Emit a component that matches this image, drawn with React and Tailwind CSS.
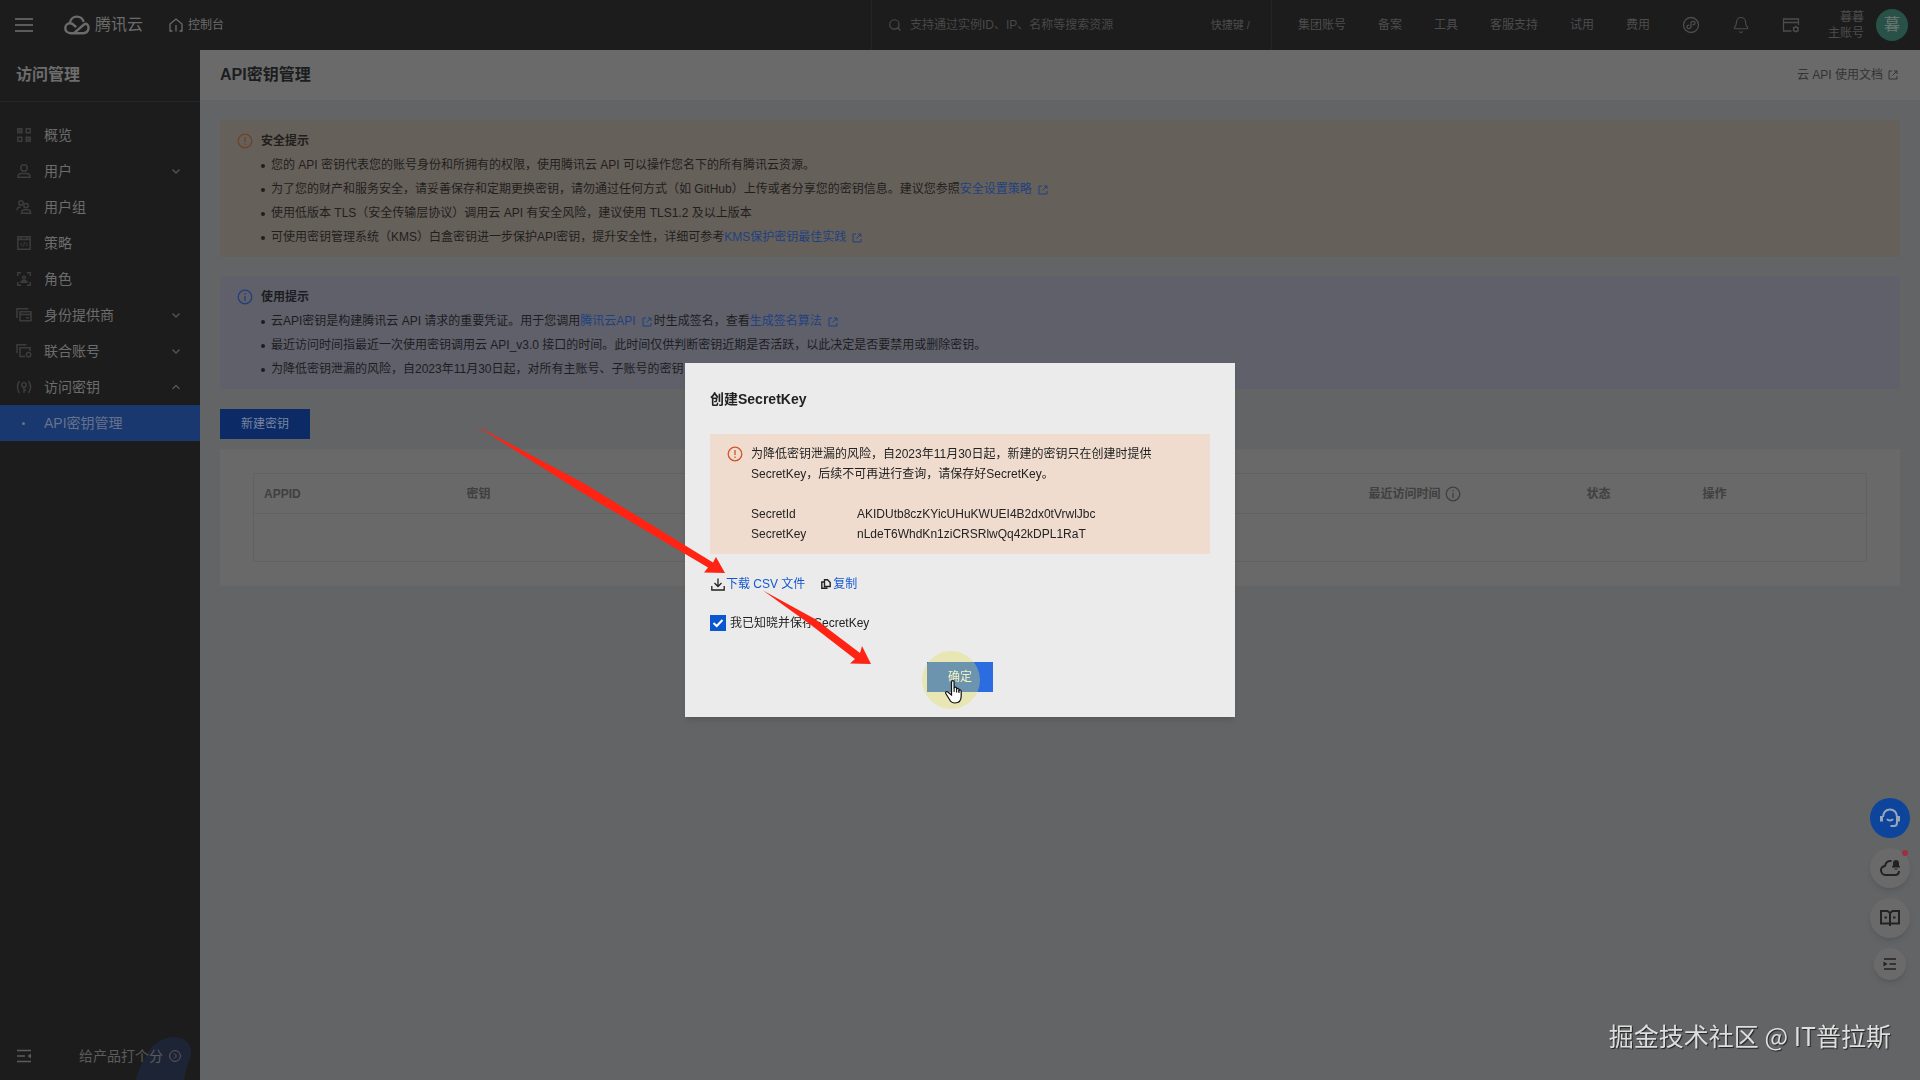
import { Bell, Search } from "lucide-react"

const navItems = [
  { label: "概览", icon: "grid" },
  { label: "用户", icon: "user", chevron: "down" },
  { label: "用户组", icon: "users" },
  { label: "策略", icon: "policy" },
  { label: "角色", icon: "role" },
  { label: "身份提供商", icon: "provider", chevron: "down" },
  { label: "联合账号", icon: "union", chevron: "down" },
  { label: "访问密钥", icon: "key", chevron: "up" },
]

const topLinks = ["集团账号", "备案", "工具", "客服支持", "试用", "费用"]

function NavIcon({ name }) {
  return (
    <svg className="w-4 h-4 shrink-0" viewBox="0 0 16 16" fill="none" stroke="currentColor" strokeWidth="1.5">
      {name === "grid" && (
        <>
          <path d="M1.8 1.8h4v4h-4zM10.2 1.8h4v4h-4zM1.8 10.2h4v4h-4zM10.2 10.2h4v4h-4z" />
          <path d="M3.8 2v4M2 3.8h4M12.2 10v4M10 12.2h4" strokeWidth="1" />
        </>
      )}
      {name === "user" && (
        <>
          <circle cx="8" cy="5" r="3.2" />
          <path d="M1.8 14.2c0-2.4 1.6-3.7 4-3.7h4.4c2.4 0 4 1.3 4 3.7z" />
        </>
      )}
      {name === "users" && (
        <>
          <circle cx="5" cy="4" r="2.2" />
          <path d="M1 11.5C1 9 2.6 8 4.5 8" />
          <circle cx="10" cy="6.6" r="2.2" />
          <path d="M5.5 14.2c0-2.2 1.3-3.4 3.2-3.4h2.6c1.9 0 3.4 1.2 3.4 3.4z" />
        </>
      )}
      {name === "policy" && (
        <>
          <path d="M1.8 1.8h12.4v12.4H1.8zM1.8 4.6h12.4M5 2v2.600M11 2v2.600" />
          <path d="M6 7.500L4.500 9.300 6 11.100M10 7.500l1.500 1.800L10 11.100M8.500 7l-1 4.500" strokeWidth="1" />
        </>
      )}
      {name === "role" && (
        <>
          <path d="M1.8 5V1.8H5M11 1.8h3.2V5M14.2 11v3.2H11M5 14.2H1.8V11" />
          <circle cx="8" cy="6.6" r="1.4" />
          <path d="M5 11.2c.5-1.4 1.5-1.8 3-1.8s2.5.4 3 1.8z" />
        </>
      )}
      {name === "provider" && (
        <>
          <path d="M1 11V1.8h11.5" />
          <path d="M4 4.8h11v9H4zM4 7.5h11" />
          <path d="M10 10.8h3" />
        </>
      )}
      {name === "union" && (
        <>
          <path d="M1 10V1.8h9.5" />
          <path d="M9 13.5H4V4.8h10V8" />
          <circle cx="12.6" cy="11.8" r="2.2" />
        </>
      )}
      {name === "key" && (
        <>
          <path d="M3.5 2C.8 5.5.8 10.5 3.5 14M12.5 2c2.7 3.5 2.7 8.5 0 12" />
          <circle cx="8" cy="6" r="2.2" />
          <path d="M8 8.2V14M8 11.2h2.2" />
        </>
      )}
    </svg>
  )
}

function Chevron({ direction }) {
  return (
    <svg className="w-2 h-2 text-[#555]" viewBox="0 0 8 8" fill="none" stroke="currentColor" strokeWidth="1.3">
      <path d={direction === "down" ? "M.5 2.5L4 6l3.5-3.5" : "M.5 6L4 2.5 7.5 6"} />
    </svg>
  )
}

function ExternalIcon() {
  return (
    <svg className="w-2.5 h-2.5 inline-block" viewBox="0 0 10 10" fill="none" stroke="currentColor">
      <path d="M4 1H1v8h8V6M6 1h3v3M9 1L4.5 5.5" />
    </svg>
  )
}

function AlertIcon({ type = "warning" }) {
  return (
    <svg className="w-4 h-4 shrink-0" viewBox="0 0 16 16" fill="none" stroke="currentColor" strokeWidth="1.3">
      <circle cx="8" cy="8" r="6.8" />
      <path d={type === "warning" ? "M8 4v5M8 10.5V12" : "M8 4v1.5M8 7v5"} />
    </svg>
  )
}

function DocLink({ children }) {
  return (
    <a href="#" className="text-[#1f4180]">
      {children}
      <span className="ml-1.5 mr-0.5">
        <ExternalIcon />
      </span>
    </a>
  )
}

function TipItem({ children }) {
  return (
    <li className="before:inline-block before:w-1 before:h-1 before:mr-1.5 before:rounded-full before:bg-current before:align-middle">
      {children}
    </li>
  )
}

function TopBar() {
  return (
    <header className="h-[50px] shrink-0 flex items-center bg-[#1c1c1c] text-[#4c4c4c] text-xs">
      <button aria-label="菜单" className="ml-[15px] w-[18px] flex flex-col gap-1">
        <span className="h-0.5 bg-[#5c5c5c]" />
        <span className="h-0.5 bg-[#5c5c5c]" />
        <span className="h-0.5 bg-[#5c5c5c]" />
      </button>
      <a href="#" className="ml-[31px] flex items-center gap-[5px] text-base text-[#6b6b6b]">
        <svg className="w-[26px] h-5" viewBox="0 0 26 20" fill="none" stroke="currentColor" strokeWidth="2.4">
          <path d="M10 18.2L20 9.500c1.200-.9 2.200-1 3-.3 2.800 2.600 1.600 9-3.500 9H6.500C3.500 18.200 1.300 16 1.300 13.200c0-2.700 2-4.900 4.700-4.900 1.800 0 3 .8 4.200 2l2 1.900" />
          <path d="M5.800 8.300C6.200 4.500 9 1.600 12.800 1.600c3.500 0 6 2.200 6.900 5.300" />
        </svg>
        腾讯云
      </a>
      <a href="#" className="ml-[26px] flex items-center gap-[5px] text-[#6b6b6b]">
        <svg className="w-3.5 h-3.5" viewBox="0 0 14 14" fill="none" stroke="currentColor" strokeWidth="1.3">
          <path d="M3.500 13H1V6l6-5 6 5v7h-2.500M7 7v6.500" />
        </svg>
        控制台
      </a>

      <div className="ml-auto w-[401px] h-full flex items-center border-x border-[#242424] pl-4">
        <Search className="w-3.5 h-3.5" strokeWidth={2} />
        <input
          aria-label="搜索"
          placeholder="支持通过实例ID、IP、名称等搜索资源"
          className="ml-2 flex-1 min-w-0 bg-transparent outline-none placeholder:text-[#484848]"
        />
        <span className="mr-[21px] text-[11px]">快捷键 /</span>
      </div>

      <nav className="ml-[26px] flex items-center gap-8">
        {topLinks.map((label) => (
          <a key={label} href="#">
            {label}
          </a>
        ))}
        <button aria-label="小程序" className="w-[18px]">
          <svg className="w-[18px] h-[18px]" viewBox="0 0 18 18" fill="none" stroke="currentColor" strokeWidth="1.3">
            <circle cx="9" cy="9" r="7.5" />
            <path d="M7.500 9.200c-1.500 0-2.500.6-2.500 1.700s.9 1.700 1.900 1.700S9 11.800 9 10.800V7.200c0-1 .9-1.800 2-1.800s2 .7 2 1.700-1 1.700-2.500 1.700" />
          </svg>
        </button>
        <button aria-label="消息">
          <Bell className="w-[18px] h-[18px]" strokeWidth={1.5} />
        </button>
        <button aria-label="控制面板">
          <svg className="w-[18px] h-[18px]" viewBox="0 0 18 18" fill="none" stroke="currentColor" strokeWidth="1.3">
            <path d="M9.500 15H1.500V3h15v6M1.500 6.500h15" />
            <circle cx="13.8" cy="13.2" r="2.2" />
            <path d="M13.800 9.800v1.200M13.800 15.400v1.200M10.800 11.500l1 .6M15.800 14.300l1 .6M16.800 11.500l-1 .6M11.800 14.300l-1 .6" />
          </svg>
        </button>
      </nav>
      <div className="ml-7 text-right leading-4">
        <div>暮暮</div>
        <div>主账号</div>
      </div>
      <div className="mx-3 w-8 h-8 rounded-full bg-[#285248] text-[#6c7672] text-base flex items-center justify-center">暮</div>
    </header>
  )
}

function Sidebar() {
  return (
    <aside className="w-[200px] shrink-0 flex flex-col bg-[#1c1c1c] text-[#6c6c6c] text-sm">
      <h2 className="h-[52px] shrink-0 flex items-center px-4 pb-0.5 text-base font-bold border-b border-[#262626]">访问管理</h2>
      <nav className="mt-[15px] flex flex-col">
        {navItems.map((item) => (
          <a key={item.label} href="#" className="h-9 flex items-center pl-4 pr-5">
            <span className="text-[#3c3c3c]">
              <NavIcon name={item.icon} />
            </span>
            <span className="ml-3 flex-1">{item.label}</span>
            {item.chevron && <Chevron direction={item.chevron} />}
          </a>
        ))}
        <a href="#" className="h-9 flex items-center bg-[#1a3870] text-[#66728a]">
          <span className="ml-[22px] mr-[19px] w-[3px] h-[3px] rounded-full bg-current" />
          API密钥管理
        </a>
      </nav>
      <div className="mt-auto h-12 relative overflow-hidden flex items-center pl-4 pr-[19px] text-[#5c5c5c]">
        <svg className="absolute right-0 bottom-0 w-16 h-11" viewBox="0 0 64 44">
          <path d="M0 44C6 26 12 4 36 1c16-1 22 12 18 22-4 8-4 14-6 21z" fill="#1d2436" />
        </svg>
        <button aria-label="收起" className="relative">
          <svg className="w-4 h-4" viewBox="0 0 16 16" fill="none" stroke="currentColor" strokeWidth="1.5">
            <path d="M1 2.500h14M1 8h8M1 13.500h14" />
            <path d="M15 5.500v5L11.500 8z" fill="currentColor" stroke="none" />
          </svg>
        </button>
        <a href="#" className="relative ml-auto flex items-center gap-1.5">
          给产品打个分
          <svg className="w-3 h-3" viewBox="0 0 12 12" fill="none" stroke="currentColor">
            <circle cx="6" cy="6" r="5.4" />
            <path d="M5 3.500L7.500 6 5 8.500" />
          </svg>
        </a>
      </div>
    </aside>
  )
}

function KeyTable() {
  return (
    <div className="mt-2.5 bg-[#696969] px-[33px] py-6">
      <table className="w-full table-fixed border border-[#616161] text-xs text-left text-[#404040]">
        <thead>
          <tr className="h-10 border-b border-[#616161]">
            <th className="w-[203px] px-2.5">APPID</th>
            <th className="px-2.5">密钥</th>
            <th className="w-[218px] px-2.5">
              <span className="flex items-center gap-1">
                最近访问时间
                <AlertIcon type="info" />
              </span>
            </th>
            <th className="w-[116px] px-2.5">状态</th>
            <th className="w-[174px] px-2.5">操作</th>
          </tr>
        </thead>
        <tbody>
          <tr className="h-12">
            <td colSpan={5} />
          </tr>
        </tbody>
      </table>
    </div>
  )
}

function Content() {
  return (
    <main className="flex-1 min-w-0 bg-[#636466]">
      <div className="h-[50px] px-5 flex items-center justify-between bg-[#6a6a6a]">
        <h1 className="text-base font-bold text-[#1c1d20]">API密钥管理</h1>
        <a href="#" className="text-xs text-[#333] flex items-center gap-[5px] pr-0.5">
          云 API 使用文档
          <ExternalIcon />
        </a>
      </div>

      <div className="p-5 text-xs leading-6">
        <section className="bg-[#66605b] text-[#221e1b] px-[17px] pt-[9px] pb-2 flex gap-2">
          <span className="mt-1 text-[#70402f]">
            <AlertIcon />
          </span>
          <div>
            <h3 className="font-bold">安全提示</h3>
            <ul>
              <TipItem>您的 API 密钥代表您的账号身份和所拥有的权限，使用腾讯云 API 可以操作您名下的所有腾讯云资源。</TipItem>
              <TipItem>
                为了您的财产和服务安全，请妥善保存和定期更换密钥，请勿通过任何方式（如 GitHub）上传或者分享您的密钥信息。建议您参照
                <DocLink>安全设置策略</DocLink>
              </TipItem>
              <TipItem>使用低版本 TLS（安全传输层协议）调用云 API 有安全风险，建议使用 TLS1.2 及以上版本</TipItem>
              <TipItem>
                可使用密钥管理系统（KMS）白盒密钥进一步保护API密钥，提升安全性，详细可参考
                <DocLink>KMS保护密钥最佳实践</DocLink>
              </TipItem>
            </ul>
          </div>
        </section>

        <section className="mt-[19px] bg-[#5f606a] text-[#1c1d22] px-[17px] pt-[9px] pb-2 flex gap-2">
          <span className="mt-1 text-[#263f78]">
            <AlertIcon type="info" />
          </span>
          <div>
            <h3 className="font-bold">使用提示</h3>
            <ul>
              <TipItem>
                云API密钥是构建腾讯云 API 请求的重要凭证。用于您调用
                <DocLink>腾讯云API</DocLink>
                时生成签名，查看
                <DocLink>生成签名算法</DocLink>
              </TipItem>
              <TipItem>最近访问时间指最近一次使用密钥调用云 API_v3.0 接口的时间。此时间仅供判断密钥近期是否活跃，以此决定是否要禁用或删除密钥。</TipItem>
              <TipItem>为降低密钥泄漏的风险，自2023年11月30日起，对所有主账号、子账号的密钥</TipItem>
            </ul>
          </div>
        </section>

        <button className="mt-5 block h-[30px] px-[21px] bg-[#0c2b66] text-[#7785a0]">新建密钥</button>
        <KeyTable />
      </div>
    </main>
  )
}

function SecretKeyDialog() {
  return (
    <div className="fixed inset-0 flex items-center justify-center">
      <div
        role="dialog"
        aria-labelledby="dialog-title"
        className="relative w-[550px] bg-[#ebebeb] px-[25px] pt-[26px] pb-[25px] text-xs leading-5 text-[#222] shadow-md"
      >
        <h2 id="dialog-title" className="text-sm font-bold">
          创建SecretKey
        </h2>
        <div className="mt-[25px] bg-[#efdccf] px-[17px] py-2.5 flex gap-2">
          <span className="mt-0.5 text-[#d0552a]">
            <AlertIcon />
          </span>
          <div>
            <p className="w-[410px]">为降低密钥泄漏的风险，自2023年11月30日起，新建的密钥只在创建时提供SecretKey，后续不可再进行查询，请保存好SecretKey。</p>
            <dl className="mt-5 grid grid-cols-[106px_auto]">
              <dt>SecretId</dt>
              <dd>AKIDUtb8czKYicUHuKWUEI4B2dx0tVrwlJbc</dd>
              <dt>SecretKey</dt>
              <dd>nLdeT6WhdKn1ziCRSRlwQq42kDPL1RaT</dd>
            </dl>
          </div>
        </div>

        <div className="mt-5 flex items-center">
          <svg className="w-4 h-4" viewBox="0 0 16 16" fill="none" stroke="#222" strokeWidth="1.3">
            <path d="M8 2.500V10M4.500 7L8 10.500 11.500 7M1.800 10v4h12.400v-4" />
          </svg>
          <a href="#" className="text-[#1558d0]">
            下载 CSV 文件
          </a>
          <svg className="ml-4 w-2.5 h-2.5" viewBox="0 0 10 10" fill="none" stroke="#222" strokeWidth="1.4">
            <path d="M3.500.8h3L9.200 3.500v4H3.500zM3 3H.8v6.200h5.700" />
          </svg>
          <a href="#" className="ml-0.5 text-[#1558d0]">
            复制
          </a>
        </div>

        <label className="mt-[19px] flex items-center gap-1">
          <span className="relative w-4 h-4">
            <input type="checkbox" defaultChecked className="block w-4 h-4 appearance-none bg-[#0b57d0]" />
            <svg className="absolute inset-0 w-4 h-4 pointer-events-none" viewBox="0 0 16 16" fill="none" stroke="#fff" strokeWidth="2">
              <path d="M3.500 8l3.200 3L12.500 5" />
            </svg>
          </span>
          我已知晓并保存SecretKey
        </label>

        <div className="mt-[29px] flex justify-center">
          <button className="h-[30px] w-[66px] bg-[#2b6de0] text-white">确定</button>
        </div>

        {/* Click highlight and pointer */}
        <div className="absolute left-[237px] top-[288px] w-[58px] h-[58px] rounded-full bg-[#e6dc50]/35" />
        <svg className="absolute left-[259px] top-[316px] w-5 h-[25px]" viewBox="0 0 20 25">
          <path
            d="M7.500 16V3.200c0-2.200 2.600-2.200 2.600 0v6c.3-1.500 2.500-1.300 2.500.3v.6c.5-1.200 2.400-.9 2.400.6v.8c.6-1 2.200-.6 2.200.8V17c0 4.500-2.400 7-6.200 7-3 0-4.500-1.500-5.500-3.500l-3.700-6c-.9-1.700 1-2.600 2.300-1.300z"
            fill="#fff"
            stroke="#111"
            strokeWidth="1.2"
          />
          <path d="M10.100 9v4M12.600 10v3.500M15 11v3" stroke="#111" strokeWidth="1.1" />
        </svg>

        {/* Red arrows */}
        <svg className="absolute inset-0 w-full h-full overflow-visible pointer-events-none" viewBox="0 0 550 354" fill="#ff2313">
          <path d="M-210 62L-100 121 28 199.500 31 194l9 16-21-.5 4-5L-104 129z" />
          <path d="M78 227.500L130 256 175 290l2-7 9 18-21-.5 5-4.500L126 262z" />
        </svg>
      </div>
    </div>
  )
}

function FloatingTools() {
  return (
    <div className="fixed right-2.5 bottom-[100px] flex flex-col items-center gap-2.5 text-[#222]">
      <button aria-label="客服" className="w-10 h-10 rounded-full bg-[#0d449c] text-[#9aa5b8] flex items-center justify-center">
        <svg className="w-5 h-5" viewBox="0 0 20 20" fill="none" stroke="currentColor" strokeWidth="2">
          <path d="M3 9c0-4.500 3-7.500 7-7.500S17 4.500 17 9v5.500c0 2-1 3.500-3 3.500h-3.500" />
          <path d="M7 11c1.500 2 4.500 2 6 0" />
          <path d="M1.500 8v5.500M18.500 8v5.500" strokeWidth="3" />
        </svg>
      </button>
      <button aria-label="通知" className="relative w-10 h-10 rounded-full bg-[#6a6a6a] shadow-md flex items-center justify-center">
        <svg className="w-5 h-5" viewBox="0 0 20 20" fill="none" stroke="currentColor" strokeWidth="2">
          <path d="M11.500 3C8 2.500 5.500 4.500 5 8c-2.500.4-4 2-4 4.300C1 15 3 17 5.500 17H15c2.500 0 4-1.600 4-4" />
          <path d="M13 7V5c0-4 6-4 6 0v2.500l1 1V9.500h-8V8.500l1-1zM14.500 10.500h3v1h-3z" fill="currentColor" stroke="none" />
        </svg>
        <span className="absolute right-0.5 top-0.5 w-1.5 h-1.5 rounded-full bg-[#9c3040]" />
      </button>
      <button aria-label="文档" className="w-10 h-10 rounded-full bg-[#6a6a6a] shadow-md flex items-center justify-center">
        <svg className="w-5 h-5" viewBox="0 0 20 20" fill="none" stroke="currentColor" strokeWidth="2">
          <path d="M10 18v-2.500H1V3h6.500L10 5l2.500-2H19v12.500h-9V5M4.500 9.500H7M13 9.500h2.500" />
        </svg>
      </button>
      <button aria-label="收起工具栏" className="w-8 h-8 rounded-full bg-[#6a6a6a] shadow-md flex items-center justify-center">
        <svg className="w-3.5 h-3.5" viewBox="0 0 14 14" fill="none" stroke="currentColor" strokeWidth="1.6">
          <path d="M1 2h12M6.500 7H13M1 12h12" />
          <path d="M.5 4.500v5L4.500 7z" fill="currentColor" stroke="none" />
        </svg>
      </button>
    </div>
  )
}

export default function App() {
  return (
    <div className="min-h-screen flex flex-col font-['Liberation_Sans','Noto_Sans_CJK_SC',sans-serif]">
      <TopBar />
      <div className="flex-1 flex">
        <Sidebar />
        <Content />
      </div>
      <SecretKeyDialog />
      <FloatingTools />
      <div className="fixed right-[29px] bottom-[27px] text-[25px] leading-9 text-[#dedede] font-['Noto_Sans_CJK_SC',sans-serif] [text-shadow:1px_1px_1px_#222]">
        掘金技术社区 @ IT普拉斯
      </div>
    </div>
  )
}
